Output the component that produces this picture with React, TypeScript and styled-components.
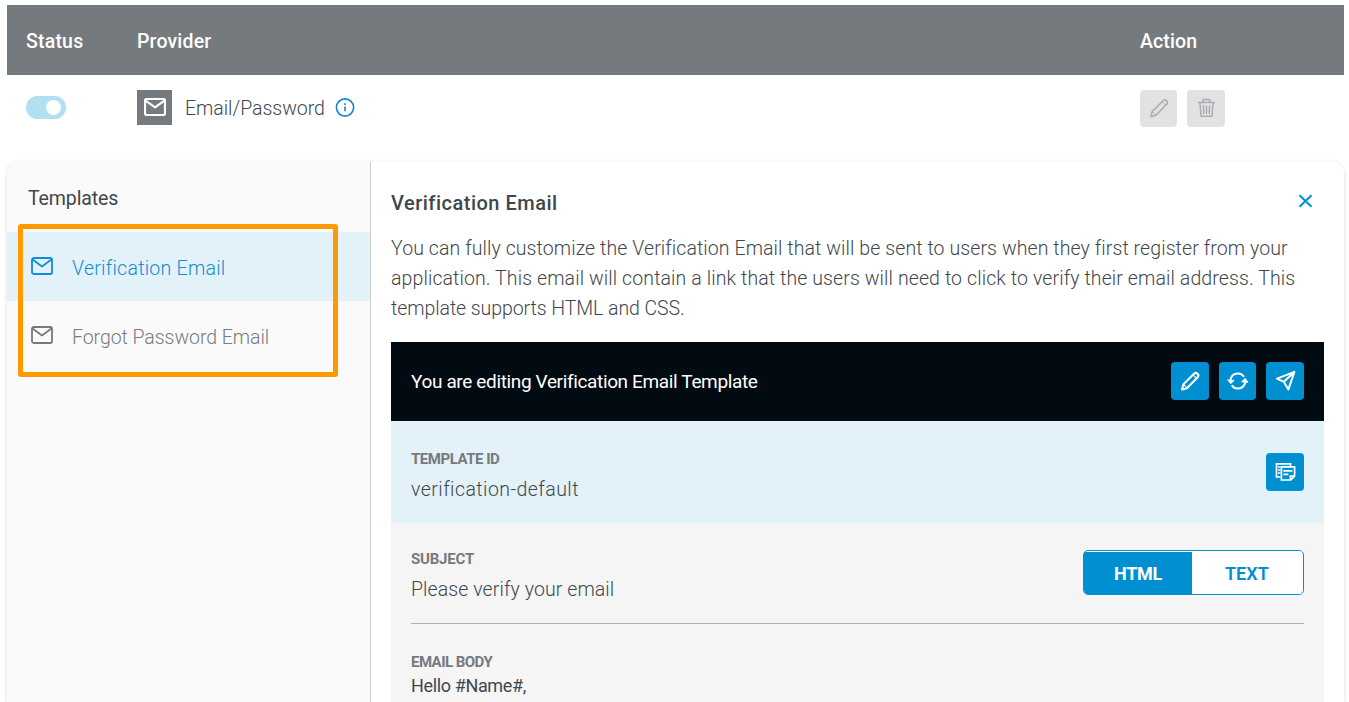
import React from "react";
import styled, { createGlobalStyle } from "styled-components";

const Global = createGlobalStyle`
  * { box-sizing: border-box; }
  html, body { margin: 0; background: #fff; overflow: hidden; }
  body { font-family: Roboto, "Liberation Sans", sans-serif; color: #3f474d; font-size: 20px; }
  button { font-family: inherit; padding: 0; cursor: pointer; }
  h2, p { margin: 0; }
  svg { display: block; }
`;

const Page = styled.div`
  width: 1349px;
  height: 702px;
  padding: 5px 5px 0 7px;
  overflow: hidden;
  display: flex;
  flex-direction: column;
`;

const Text = styled.span<{ $size?: number; $weight?: number; $track?: number; $color?: string }>`
  display: block;
  white-space: nowrap;
  font-size: ${(p) => p.$size ?? 19.5}px;
  font-weight: ${(p) => p.$weight ?? 300};
  letter-spacing: ${(p) => p.$track ?? 0}px;
  line-height: 24px;
  color: ${(p) => p.$color ?? "#3f474d"};
`;

const TableRow = styled.div<{ $head?: boolean }>`
  flex: none;
  display: grid;
  grid-template-columns: 111px 1003px 1fr;
  align-items: ${(p) => (p.$head ? "center" : "start")};
  height: ${(p) => (p.$head ? 70 : 87)}px;
  padding: ${(p) => (p.$head ? "4px 0 0 19px" : "15px 0 0 19px")};
  background: ${(p) => (p.$head ? "#757a7e" : "#fff")};
`;

const Switch = styled.div`
  width: 40px;
  height: 23px;
  margin-top: 6px;
  padding: 4px 5px;
  border-radius: 12px;
  background: #b3dff3;
  display: flex;
  justify-content: flex-end;
`;

const Knob = styled.span`
  width: 15px;
  height: 15px;
  border-radius: 50%;
  background: #fff;
`;

const Provider = styled.div`
  display: flex;
  align-items: center;
  height: 35px;
`;

const ProviderBadge = styled.div`
  width: 35px;
  height: 35px;
  margin-right: 13px;
  padding: 8px 0 0 7px;
  background: #757a7e;
  color: #fff;
`;

const ProviderName = styled(Text)`
  width: 150px;
  padding-top: 2px;
  line-height: 24px;
`;

const Actions = styled.div`
  display: flex;
  gap: 10px;
`;

const IconButton = styled.button<{ $muted?: boolean; $narrow?: boolean }>`
  flex: none;
  width: ${(p) => (p.$narrow ? 37 : 38)}px;
  height: ${(p) => (p.$muted ? 37 : 38)}px;
  border: 0;
  border-radius: 4px;
  background: ${(p) => (p.$muted ? "#e1e3e3" : "#0090d1")};
  color: ${(p) => (p.$muted ? "#aaacaf" : "#fff")};
`;

const Card = styled.section`
  flex: 1;
  min-height: 0;
  display: flex;
  border-radius: 10px 10px 0 0;
  box-shadow: 0 1px 4px rgba(0, 0, 0, 0.14);
`;

const Sidebar = styled.aside`
  position: relative;
  width: 364px;
  border-right: 1px solid #cbcccd;
  border-radius: 10px 0 0 0;
  background: #fafafa;
`;

const SidebarTitle = styled.div`
  height: 70px;
  padding: 25px 0 0 21px;
`;

const SidebarItem = styled.div<{ $active?: boolean }>`
  height: 69px;
  padding: 4px 0 0 24px;
  display: flex;
  align-items: center;
  gap: 19px;
  background: ${(p) => (p.$active ? "#e3f1f8" : "transparent")};
  color: ${(p) => (p.$active ? "#0f8fd3" : "#757a7e")};
  svg { margin-top: -5px; }
`;

const Highlight = styled.div`
  position: absolute;
  left: 11px;
  top: 62px;
  width: 320px;
  height: 153px;
  border: 5px solid #ff9900;
  border-radius: 3px;
`;

const Main = styled.main`
  flex: 1;
  padding: 28px 20px 0;
`;

const MainHeader = styled.div`
  display: flex;
  justify-content: space-between;
  height: 44px;
  h2 { padding-top: 1px; }
`;

const CloseButton = styled.button`
  width: 38px;
  height: 24px;
  border: 0;
  background: none;
  color: #0090d1;
`;

const Description = styled.div`
  height: 108px;
  ${Text} { line-height: 30px; }
`;

const EditorBar = styled.div`
  height: 79px;
  padding: 0 20px 1px;
  display: flex;
  align-items: center;
  gap: 10px;
  background: #020a12;
  ${Text} { flex: 1; padding-top: 2px; }
`;

const Field = styled.div<{ $blue?: boolean }>`
  height: ${(p) => (p.$blue ? 102 : 179)}px;
  padding: ${(p) => (p.$blue ? "26px 20px 0" : "24px 20px 0")};
  background: ${(p) => (p.$blue ? "#e3f1f8" : "#f5f5f5")};
`;

const FieldRow = styled.div<{ $line?: boolean }>`
  display: flex;
  justify-content: space-between;
  height: ${(p) => (p.$line ? 77 : 70)}px;
  border-bottom: ${(p) => (p.$line ? "1px solid #b1b1b2" : "0")};
`;

const Caption = styled(Text)`
  margin-bottom: 7px;
`;

const BodyBlock = styled.div`
  padding-top: 26px;
  ${Caption} { margin-bottom: 0; }
`;

const CopyWrap = styled.div`
  padding-top: 6px;
`;

const Toggle = styled.div`
  width: 221px;
  height: 45px;
  margin-top: 3px;
  border: 1px solid #0090d1;
  border-radius: 5px;
  background: #fff;
  display: flex;
  overflow: hidden;
`;

const ToggleOption = styled.div<{ $on?: boolean }>`
  width: ${(p) => (p.$on ? 108 : 110)}px;
  margin-top: ${(p) => (p.$on ? 1 : 0)}px;
  padding-top: ${(p) => (p.$on ? 2 : 3)}px;
  display: grid;
  place-items: center;
  background: ${(p) => (p.$on ? "#0090d1" : "#fff")};
`;

const MailIcon = ({ w = 1.8 }: { w?: number }) => (
  <svg width="22" height="18" viewBox="0 0 22 18" fill="none" stroke="currentColor" strokeWidth={w} strokeLinejoin="round">
    <rect x="1" y="1" width="20" height="16" rx="1.8" />
    <path d="M1.6 2.6 11 9.4l9.4-6.8" />
  </svg>
);

const InfoIcon = () => (
  <svg width="20" height="20" viewBox="0 0 20 20" fill="none" stroke="#0f86cd" strokeWidth="1.6">
    <circle cx="10" cy="9.5" r="8.6" />
    <path d="M10 8.4v4.8M10 5.2v1.7" />
  </svg>
);

const PencilIcon = ({ w = 2 }: { w?: number }) => (
  <svg width="37" height="37" viewBox="0 0 37 37" fill="none" stroke="currentColor" strokeWidth={w} strokeLinejoin="round">
    <path d="M11 26.6l1.3-5.2L23 10.8a2.4 2.4 0 0 1 3.6 3.5L16 25.2l-5 1.4z" />
    <path d="M12.6 21.4l3.3 3.5M22 11.8l3.4 3.4" strokeWidth={w * 0.55} />
  </svg>
);

const TrashIcon = () => (
  <svg width="38" height="37" viewBox="0 0 38 37" fill="none" stroke="currentColor" strokeWidth="1.5">
    <path d="M10.8 12.4h17.4M16.2 12V9.6h6.4V12M12.9 13l1.2 13.2h10.8L26.1 13M16.4 15.3l.4 8.6M19.5 15.3v8.6M22.6 15.3l-.4 8.6" />
  </svg>
);

const RefreshIcon = () => (
  <svg width="37" height="38" viewBox="0 0 37 38" fill="none" stroke="currentColor" strokeWidth="2">
    <path d="M11.6 18.6a7.3 7.3 0 0 1 13.4-3.8M26.2 19.4a7.3 7.3 0 0 1-13.4 3.8" />
    <path d="M8.6 17.8l3.1 4 3.4-3.4z M22.6 19.8l3.6-3.6 2.9 4.2z" fill="currentColor" strokeWidth=".7" strokeLinejoin="round" />
  </svg>
);

const SendIcon = () => (
  <svg width="38" height="38" viewBox="0 0 38 38" fill="none" stroke="currentColor" strokeWidth="2" strokeLinejoin="round">
    <path d="M28.4 9.9 11 16.6l6.8 3.2 4.6 7.6zM17.8 19.8 28.4 9.9" />
  </svg>
);

const CopyIcon = () => (
  <svg width="38" height="38" viewBox="0 0 38 38" fill="none" stroke="currentColor" strokeWidth="1.7">
    <path d="M14.5 24h-4V10.8h14V13M12 14h2.5M12 17h2.5M12 20h2.5" />
    <path d="M15.4 13.8h13.2v9.4l-3.8 3.8h-9.4zM24.4 27v-4h4M17.4 17.9h9M17.4 21.4h5" />
  </svg>
);

const CloseIcon = () => (
  <svg width="38" height="24" viewBox="0 0 38 24" fill="none" stroke="currentColor" strokeWidth="2">
    <path d="M13.5 5.3l12 11.4M25.5 5.3l-12 11.4" />
  </svg>
);

export default function App() {
  return (
    <Page>
      <Global />
      <TableRow $head>
        <Text $weight={500} $track={0.2} $color="#fff">Status</Text>
        <Text $weight={500} $track={0.17} $color="#fff">Provider</Text>
        <Text $weight={500} $track={0.1} $color="#fff">Action</Text>
      </TableRow>
      <TableRow>
        <Switch><Knob /></Switch>
        <Provider>
          <ProviderBadge><MailIcon w={2.2} /></ProviderBadge>
          <ProviderName $track={-0.03}>Email/Password</ProviderName>
          <InfoIcon />
        </Provider>
        <Actions>
          <IconButton $muted $narrow><PencilIcon w={1.6} /></IconButton>
          <IconButton $muted><TrashIcon /></IconButton>
        </Actions>
      </TableRow>
      <Card>
        <Sidebar>
          <SidebarTitle><Text $weight={400} $track={-0.1}>Templates</Text></SidebarTitle>
          <SidebarItem $active><MailIcon /><Text $track={0.27} $color="inherit">Verification Email</Text></SidebarItem>
          <SidebarItem><MailIcon /><Text $track={-0.05} $color="inherit">Forgot Password Email</Text></SidebarItem>
          <Highlight />
        </Sidebar>
        <Main>
          <MainHeader>
            <Text as="h2" $weight={500} $size={20} $track={0.5}>Verification Email</Text>
            <CloseButton><CloseIcon /></CloseButton>
          </MainHeader>
          <Description>
            <Text $track={0.09}>You can fully customize the Verification Email that will be sent to users when they first register from your</Text>
            <Text $track={0.107}>application. This email will contain a link that the users will need to click to verify their email address. This</Text>
            <Text $track={-0.07}>template supports HTML and CSS.</Text>
          </Description>
          <EditorBar>
            <Text $weight={400} $size={19} $track={-0.36} $color="#fff">You are editing Verification Email Template</Text>
            <IconButton><PencilIcon /></IconButton>
            <IconButton $narrow><RefreshIcon /></IconButton>
            <IconButton><SendIcon /></IconButton>
          </EditorBar>
          <Field $blue>
            <FieldRow>
              <div>
                <Caption $size={15} $weight={700} $track={-0.47} $color="#757a7e">TEMPLATE ID</Caption>
                <Text $track={0.46}>verification-default</Text>
              </div>
              <CopyWrap><IconButton><CopyIcon /></IconButton></CopyWrap>
            </FieldRow>
          </Field>
          <Field>
            <FieldRow $line>
              <div>
                <Caption $size={15} $weight={700} $track={-0.2} $color="#757a7e">SUBJECT</Caption>
                <Text $track={0.09}>Please verify your email</Text>
              </div>
              <Toggle>
                <ToggleOption $on><Text $weight={700} $size={18} $track={-0.3} $color="#fff">HTML</Text></ToggleOption>
                <ToggleOption><Text $weight={600} $size={18} $track={0.1} $color="#0090d1">TEXT</Text></ToggleOption>
              </Toggle>
            </FieldRow>
            <BodyBlock>
              <Caption $size={15} $weight={700} $track={-0.55} $color="#757a7e">EMAIL BODY</Caption>
              <Text $size={18} $weight={400} $track={-0.36}>Hello #Name#,</Text>
            </BodyBlock>
          </Field>
        </Main>
      </Card>
    </Page>
  );
}
